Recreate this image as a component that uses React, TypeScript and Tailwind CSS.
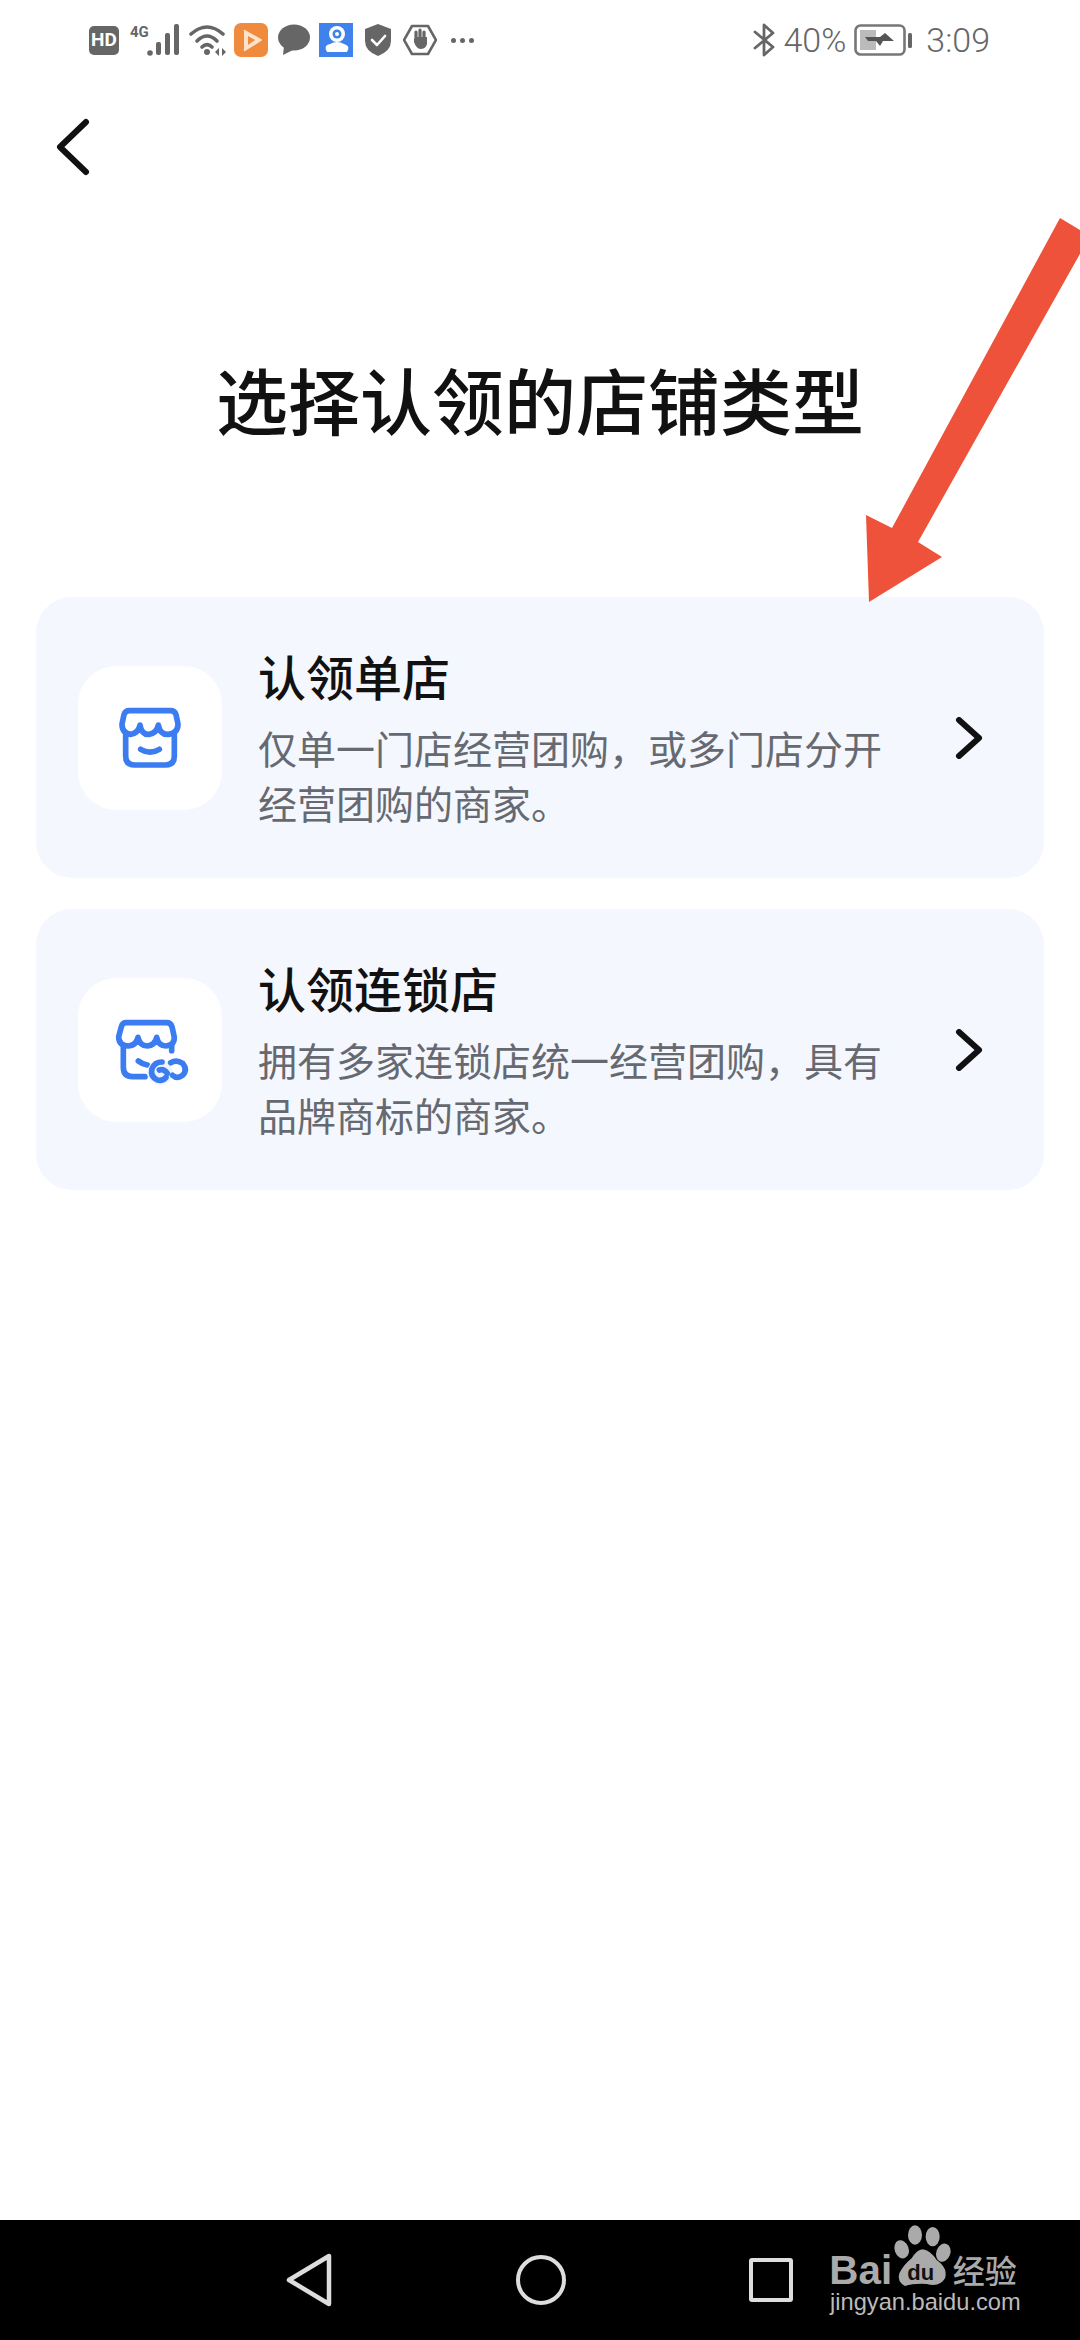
const CJK = "font-['Noto_Sans_CJK_SC',sans-serif]";

function StoreIcon() {
  return (
    <svg width="144" height="144" viewBox="54 48 432 432" fill="none" stroke="#3b7cf0" strokeWidth="17" strokeLinecap="round" strokeLinejoin="round">
      <path d="M208 182 H332 Q344 182 348 194 L354 222 Q354 250 325 253 Q300 255 295 225 Q290 250 267 253 Q245 255 240 225 Q235 250 212 253 Q186 250 186 222 L192 194 Q196 182 208 182 Z" />
      <path d="M197 255 V318 Q197 345 224 345 H316 Q343 345 343 318 V255" />
      <path d="M242 298 Q270 315 298 298" />
    </svg>
  );
}

function ChainStoreIcon() {
  return (
    <svg width="144" height="144" viewBox="54 54 432 432" fill="none" stroke="#3b7cf0" strokeWidth="17" strokeLinecap="round" strokeLinejoin="round">
      <path d="M198 188 H320 Q332 188 336 200 L343 232 Q343 256 318 258 Q295 258 290 232 Q285 256 262 258 Q240 258 234 232 Q229 256 205 258 Q176 256 176 230 L184 200 Q188 188 198 188 Z" />
      <path d="M190 258 V322 Q190 350 218 350 H255" />
      <path d="M335 258 V272" />
      <path d="M235 303 Q246 312 262 315" />
      <circle cx="300" cy="337" r="38" fill="#eef4fe" stroke="none" />
      <path d="M306 306 Q284 306 276 326 Q270 350 292 360 Q308 364 318 352" />
      <path d="M298 330 Q312 326 322 340" />
      <path d="M332 308 Q350 298 368 310 Q384 330 368 346 Q352 358 338 346" />
    </svg>
  );
}

function Chevron() {
  return (
    <svg width="28" height="42" viewBox="0 0 28 42" fill="none" stroke="#111" strokeWidth="6" strokeLinecap="round" strokeLinejoin="round">
      <path d="M4 3 L24 21 L4 39" />
    </svg>
  );
}

function StoreCard({ title, desc, icon }: { title: string; desc: string; icon: React.ReactNode }) {
  return (
    <div className="flex h-[281px] items-center rounded-[36px] bg-[#f4f7fe] pl-[42px] pr-[61px]">
      <div className="h-[144px] w-[144px] shrink-0 rounded-[38px] bg-white">{icon}</div>
      <div className="ml-[36px] w-[630px] pt-[2px]">
        <div className="text-[48px] leading-[56px] font-medium text-[#111]">{title}</div>
        <div className="mt-[17px] text-[39px] leading-[55px] text-[#666a70]">{desc}</div>
      </div>
      <div className="ml-auto">
        <Chevron />
      </div>
    </div>
  );
}

function StatusBar() {
  return (
    <div className="flex h-[80px] items-center pl-[89px] pr-[90px] text-[#666]">
      <div className="flex h-[29px] w-[30px] items-center justify-center rounded-[5px] bg-[#666] font-['Roboto',sans-serif] text-[19px] font-bold text-white">HD</div>
      <svg className="ml-[11px]" width="50" height="34" viewBox="0 0 50 34" fill="#666">
        <text x="0" y="14" fontSize="15" fontWeight="700" fontFamily="Roboto, sans-serif">4G</text>
        <circle cx="20" cy="30" r="2.8" />
        <rect x="26" y="19" width="5" height="13" rx="2" />
        <rect x="35" y="10" width="5" height="22" rx="2" />
        <rect x="44" y="1" width="5" height="31" rx="2" />
      </svg>
      <svg className="ml-[9px]" width="38" height="34" viewBox="0 0 38 34" fill="none" stroke="#666" strokeWidth="3.6" strokeLinecap="round">
        <path d="M2 11 Q18 -3 34 11" />
        <path d="M8 18 Q18 8 28 18" />
        <path d="M13 24 Q18 19 23 24" />
        <circle cx="18" cy="29" r="3" fill="#666" stroke="none" />
        <path d="M30 25 L26 29 L30 33 Z M33 25 L37 29 L33 33 Z" fill="#666" stroke="none" />
      </svg>
      <svg className="ml-[7px]" width="34" height="34" viewBox="0 0 34 34">
        <rect width="34" height="34" rx="7" fill="#f08a3c" />
        <path d="M10 8 Q9 6 11 7 L27 16 Q29 17 27 18 L11 28 Q9 29 10 26 Z" fill="#fde3cc" />
        <path d="M14 13 L21 17 L14 22 Z" fill="#f08a3c" />
      </svg>
      <svg className="ml-[10px]" width="32" height="32" viewBox="0 0 32 32" fill="#666">
        <ellipse cx="16" cy="13.5" rx="16" ry="13" />
        <path d="M6 22 L5 31 L15 26 Z" />
      </svg>
      <svg className="ml-[9px]" width="34" height="34" viewBox="0 0 34 34">
        <rect width="34" height="34" fill="#3f82ec" />
        <circle cx="18" cy="11" r="8" fill="#fff" />
        <circle cx="18" cy="11" r="4.5" fill="#3f82ec" />
        <circle cx="18" cy="11" r="2" fill="#fff" />
        <path d="M8 29 Q4 22 11 21 Q18 17 25 21 Q32 23 28 29 Z" fill="#fff" />
      </svg>
      <svg className="ml-[12px]" width="26" height="32" viewBox="0 0 26 32">
        <path d="M13 0 L26 5 V17 Q26 27 13 32 Q0 27 0 17 V5 Z" fill="#666" />
        <path d="M7 16 L12 21 L20 12" fill="none" stroke="#fff" strokeWidth="2.6" strokeLinecap="round" strokeLinejoin="round" />
      </svg>
      <svg className="ml-[12px]" width="34" height="32" viewBox="0 0 34 32" fill="none">
        <path d="M9 2 H25 L33 16 L25 30 H9 L1 16 Z" stroke="#666" strokeWidth="2.6" strokeLinejoin="round" />
        <path d="M13 15 V8 M17 15 V6 M21 15 V8" stroke="#666" strokeWidth="3.2" strokeLinecap="round" />
        <path d="M11 15 L13 13 H24 V20 Q23 25 17 25 Q13 24 11 18 Z" fill="#666" />
      </svg>
      <div className="ml-[14px] flex gap-[4px]">
        <span className="h-[5px] w-[5px] rounded-full bg-[#666]" />
        <span className="h-[5px] w-[5px] rounded-full bg-[#666]" />
        <span className="h-[5px] w-[5px] rounded-full bg-[#666]" />
      </div>

      <svg className="ml-auto" width="22" height="34" viewBox="0 0 22 34" fill="none" stroke="#666" strokeWidth="2.8" strokeLinejoin="round" strokeLinecap="round">
        <path d="M2 9 L20 24 L11 32 V2 L20 10 L2 25" />
      </svg>
      <span className="ml-[8px] font-['Roboto',sans-serif] text-[34px] font-light leading-none">40%</span>
      <svg className="ml-[8px]" width="60" height="32" viewBox="0 0 60 32">
        <rect x="1.5" y="1.5" width="49" height="29" rx="5" fill="none" stroke="#777" strokeWidth="2.6" />
        <rect x="6" y="6" width="16" height="20" fill="#bbb" />
        <path d="M11 13 H26 L31 9 L40 17 H29 L26 22 L22 17 H14 Z" fill="#555" />
        <rect x="54" y="9" width="4" height="15" rx="1.5" fill="#666" />
      </svg>
      <span className="ml-[12px] font-['Roboto',sans-serif] text-[34px] font-light leading-none">3:09</span>
    </div>
  );
}

function BaiduMark() {
  return (
    <svg className="absolute left-[780px] top-[-10px]" width="300" height="130" viewBox="0 0 900 390">
      <text x="148" y="223" fontSize="121" fontWeight="700" fontFamily="Liberation Sans, sans-serif" fill="#aaa">Bai</text>
      <ellipse cx="405" cy="75" rx="21" ry="29" fill="#aaa" />
      <ellipse cx="458" cy="80" rx="21" ry="29" fill="#aaa" />
      <ellipse cx="365" cy="118" rx="21" ry="28" fill="#aaa" transform="rotate(-20 365 118)" />
      <ellipse cx="490" cy="128" rx="21" ry="28" fill="#aaa" transform="rotate(20 490 128)" />
      <path d="M428 118 Q450 120 470 150 Q505 175 495 205 Q480 232 440 222 Q400 220 375 228 Q350 215 358 190 Q370 165 395 145 Q410 120 428 118 Z" fill="#aaa" />
      <text x="382" y="210" fontSize="66" fontWeight="700" fontFamily="Liberation Sans, sans-serif" fill="#111">du</text>
      <text x="518" y="218" fontSize="96" fontWeight="500" fontFamily="Noto Sans CJK SC, sans-serif" fill="#aaa">经验</text>
      <text x="150" y="300" fontSize="71" fontFamily="Liberation Sans, sans-serif" fill="#bbb">jingyan.baidu.com</text>
    </svg>
  );
}

export default function App() {
  return (
    <div className={`relative flex h-[2340px] w-[1080px] flex-col overflow-hidden bg-white ${CJK}`}>
      <StatusBar />
      <div className="flex h-[134px] items-center pl-[55px]">
        <svg width="36" height="58" viewBox="0 0 36 58" fill="none" stroke="#111" strokeWidth="6" strokeLinecap="round" strokeLinejoin="round">
          <path d="M31 4 L5 29 L31 54" />
        </svg>
      </div>
      <h1 className="mt-[134px] text-center text-[72px] leading-[100px] font-medium text-[#111]">选择认领的店铺类型</h1>
      <div className="mt-[149px] flex flex-col gap-[31px] px-[36px]">
        <StoreCard icon={<StoreIcon />} title="认领单店" desc="仅单一门店经营团购，或多门店分开经营团购的商家。" />
        <StoreCard icon={<ChainStoreIcon />} title="认领连锁店" desc="拥有多家连锁店统一经营团购，具有品牌商标的商家。" />
      </div>
      <div className="flex-1" />
      <div className="relative flex h-[120px] items-center bg-black pl-[285px]">
        <svg width="48" height="56" viewBox="0 0 48 56" fill="none" stroke="#ddd" strokeWidth="4.5" strokeLinejoin="round">
          <path d="M44 4 V52 L4 28 Z" />
        </svg>
        <span className="ml-[183px] h-[50px] w-[50px] rounded-full border-[4.5px] border-[#ddd]" />
        <span className="ml-[183px] h-[44px] w-[44px] rounded-[3px] border-[4.5px] border-[#ddd]" />
        <BaiduMark />
      </div>
      {/* red annotation arrow drawn on top of the screenshot */}
      <svg className="absolute left-0 top-0" width="1080" height="640" viewBox="0 0 1080 640">
        <path d="M1060 218 L1090 236 L918 542 L942 557 L869 602 L866 515 L892 528 Z" fill="#ee523a" />
      </svg>
    </div>
  );
}
